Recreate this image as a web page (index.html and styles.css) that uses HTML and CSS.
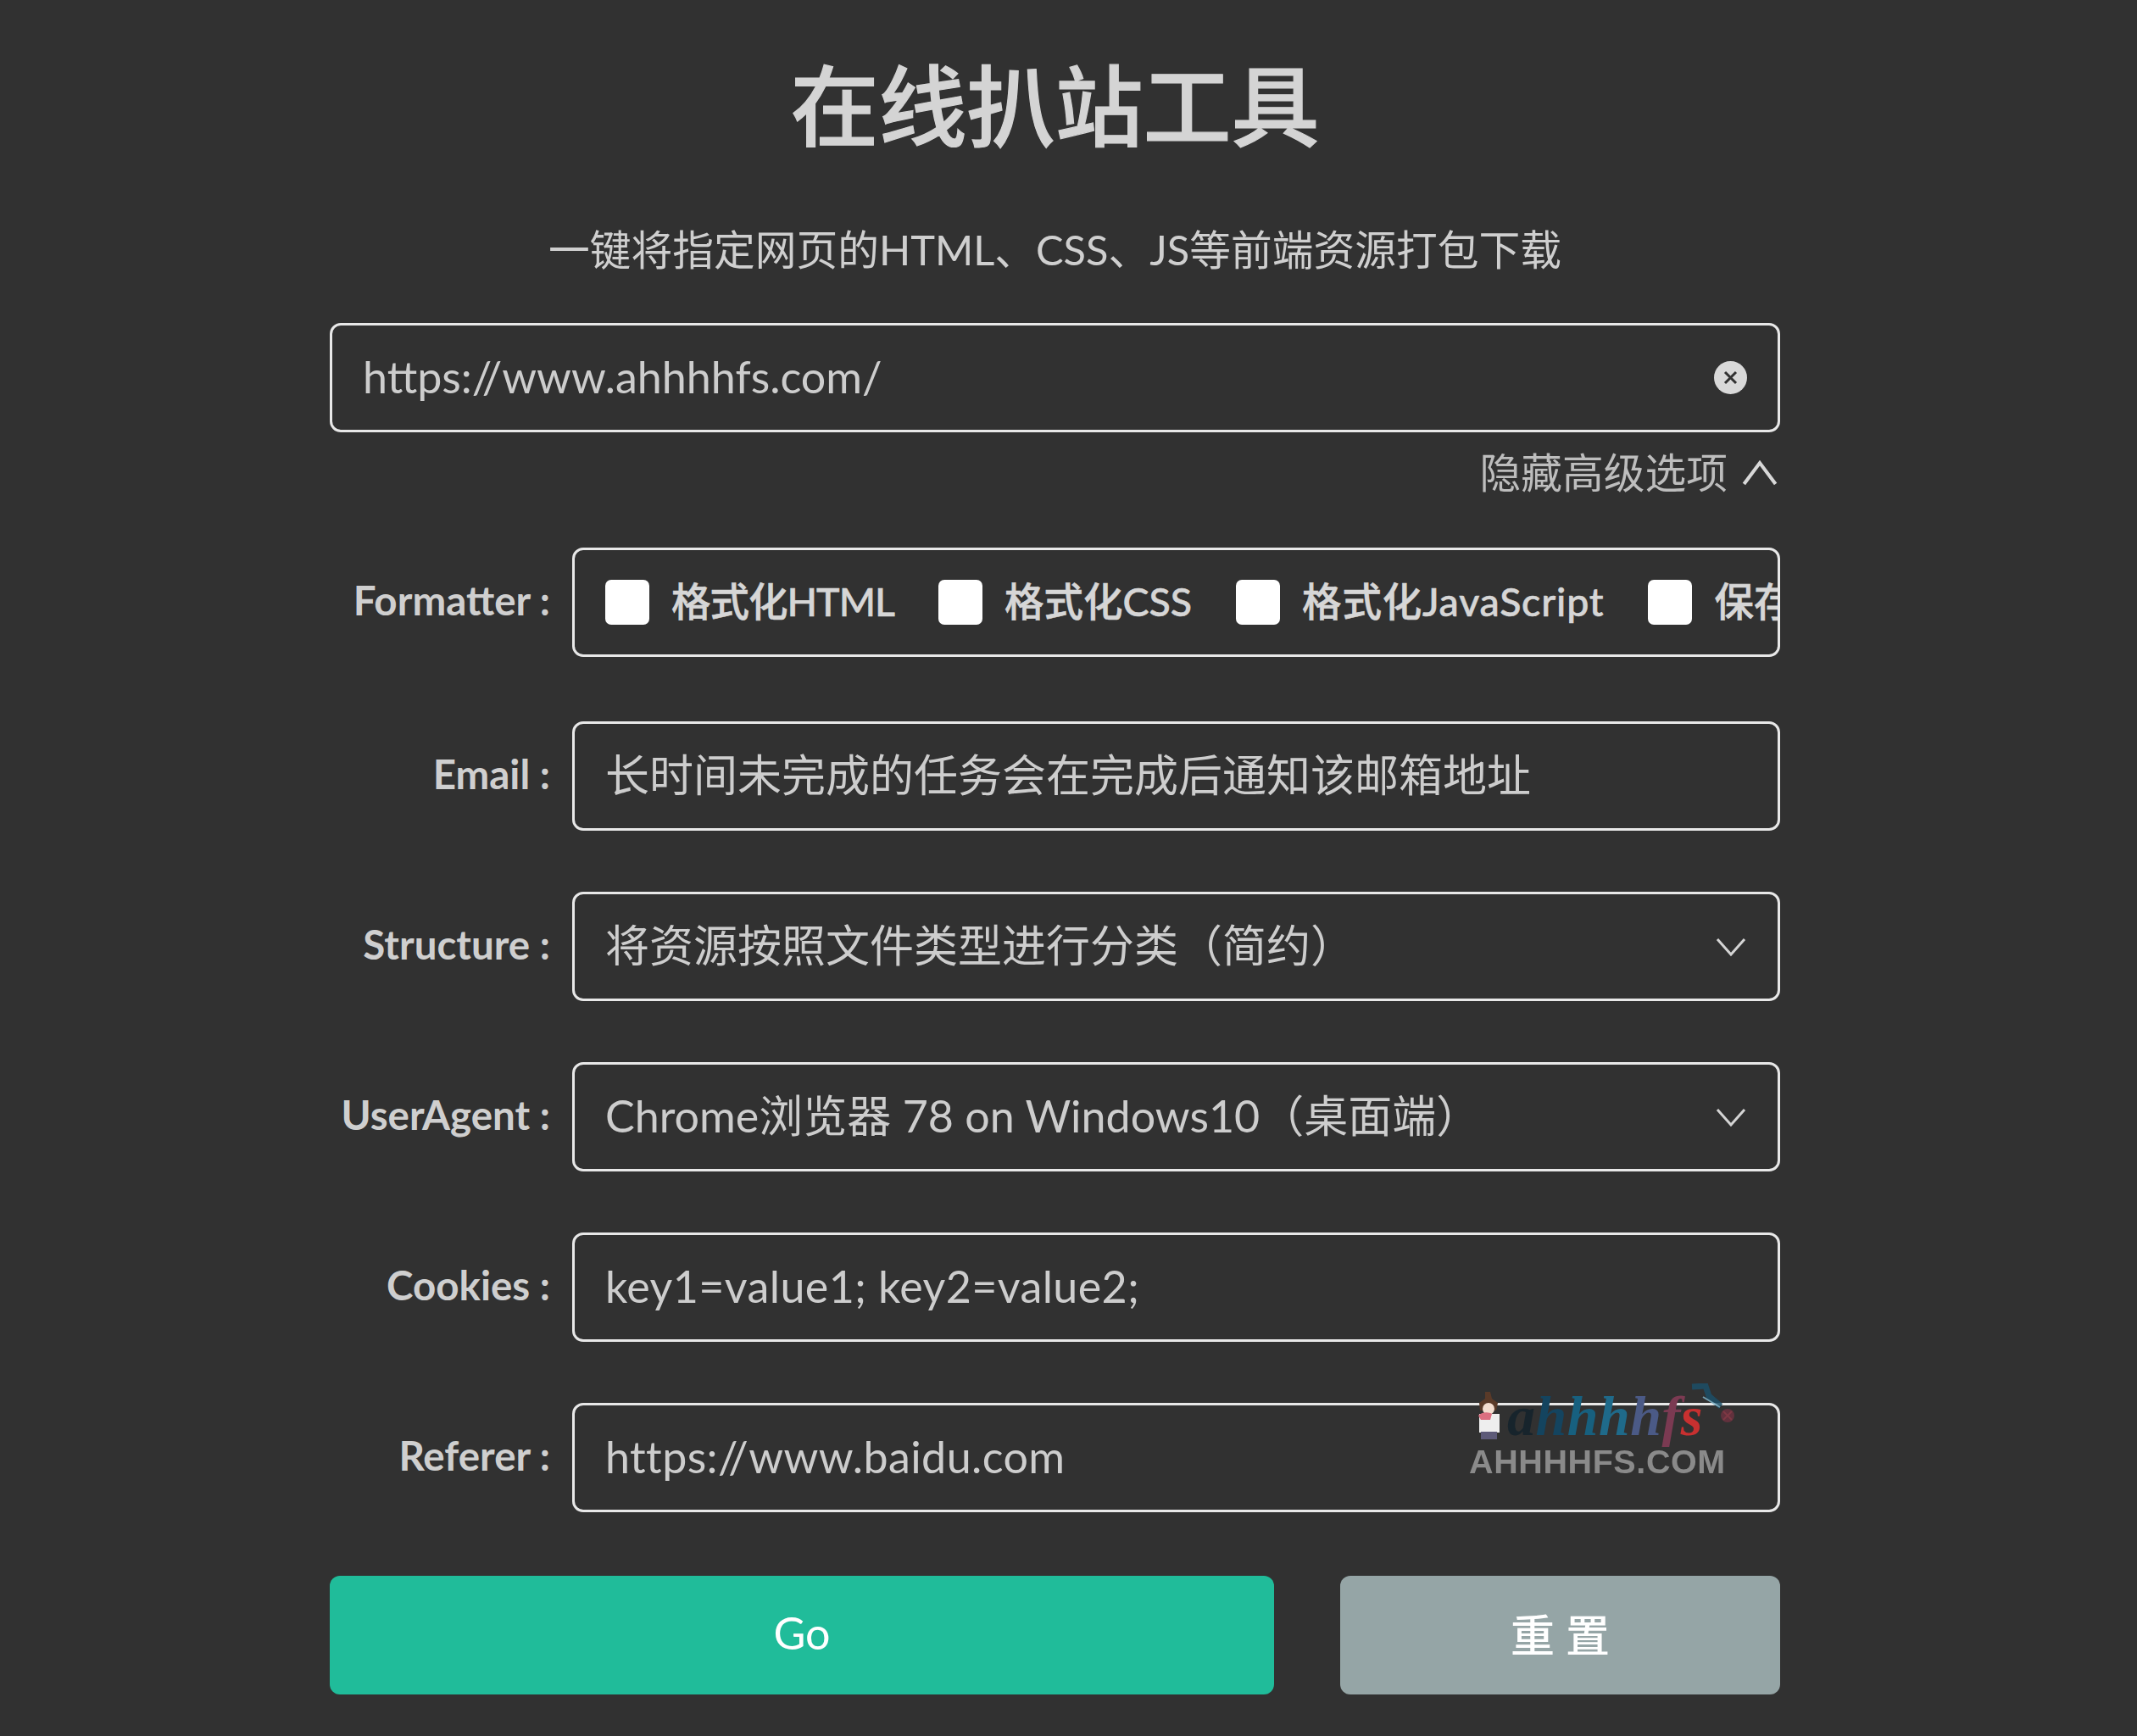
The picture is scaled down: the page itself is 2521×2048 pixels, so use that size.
FILE: index.html
```html
<!DOCTYPE html>
<html lang="zh-CN">
<head>
<meta charset="utf-8">
<title>在线扒站工具</title>
<link rel="stylesheet" href="styles.css">
</head>
<body>
<main class="page">
  <h1 class="title">在线扒站工具</h1>
  <p class="subtitle">一键将指定网页的HTML、CSS、JS等前端资源打包下载</p>

  <div class="box url-box">
    <span class="value latin">https://www.ahhhhfs.com/</span>
    <svg class="clear" viewBox="0 0 39 39" aria-hidden="true"><circle cx="19.5" cy="19.5" r="19.5" fill="#d9d9d9"/><path d="M13 13l13 13M26 13L13 26" stroke="#313131" stroke-width="3" fill="none"/></svg>
  </div>

  <div class="toggle">
    <span>隐藏高级选项</span>
    <svg class="chev-up" viewBox="0 0 40 30" aria-hidden="true"><path d="M2 28L20 4l18 24" stroke="#d8d8d8" stroke-width="4" fill="none"/></svg>
  </div>

  <form class="rows">
    <div class="row row-first">
      <label class="label">Formatter :</label>
      <div class="box checks">
        <span class="check"><i class="tick"></i><span class="check-text narrow">格式化HTML</span></span>
        <span class="check"><i class="tick"></i><span class="check-text">格式化CSS</span></span>
        <span class="check"><i class="tick"></i><span class="check-text wide">格式化JavaScript</span></span>
        <span class="check"><i class="tick"></i><span class="check-text">保存网页</span></span>
      </div>
    </div>
    <div class="row">
      <label class="label">Email :</label>
      <div class="box"><span class="value">长时间未完成的任务会在完成后通知该邮箱地址</span></div>
    </div>
    <div class="row">
      <label class="label">Structure :</label>
      <div class="box">
        <span class="value">将资源按照文件类型进行分类（简约）</span>
        <svg class="chev" viewBox="0 0 36 24" aria-hidden="true"><path d="M2 3l16 18L34 3" stroke="#d4d4d4" stroke-width="3" fill="none"/></svg>
      </div>
    </div>
    <div class="row">
      <label class="label">UserAgent :</label>
      <div class="box">
        <span class="value">Chrome浏览器 78 on Windows10（桌面端）</span>
        <svg class="chev" viewBox="0 0 36 24" aria-hidden="true"><path d="M2 3l16 18L34 3" stroke="#d4d4d4" stroke-width="3" fill="none"/></svg>
      </div>
    </div>
    <div class="row">
      <label class="label">Cookies :</label>
      <div class="box"><span class="value latin wide">key1=value1; key2=value2;</span></div>
    </div>
    <div class="row">
      <label class="label">Referer :</label>
      <div class="box"><span class="value latin wide">https://www.baidu.com</span></div>
      <div class="mark">
        <div class="mark-top">
          <svg class="mark-girl" viewBox="0 0 26 56" aria-hidden="true">
            <path d="M9 0h6l2 8 7 5-2 9H3L2 13l7-5z" fill="#5a3a28"/>
            <circle cx="13" cy="20" r="7" fill="#f3ddcf"/>
            <path d="M2 26h24v22H2z" fill="#eeeeee"/>
            <path d="M1 28c5-5 13-4 16-2l-2 7H4z" fill="#dc6f80"/>
            <path d="M4 47h19v9H4z" fill="#5d5a78"/>
          </svg>
          <span class="mark-word"><b class="c1">a</b><b class="c2">h</b><b class="c3">h</b><b class="c4">h</b><b class="c5">h</b><b class="c6">f</b><b class="c7">s</b></span>
          <svg class="mark-deco" viewBox="0 0 56 50" aria-hidden="true">
            <path d="M3 4l16-1 4 12 14 12" stroke="#1d4f68" stroke-width="7" fill="none"/>
            <path d="M16 16l20 12" stroke="#7fb3c8" stroke-width="2" fill="none"/>
            <circle cx="45" cy="38" r="8" fill="#6b3240"/>
            <path d="M40 33l10 10M50 33L40 43" stroke="#8c3a48" stroke-width="2" fill="none"/>
          </svg>
        </div>
        <div class="mark-site">AHHHHFS.COM</div>
      </div>
    </div>
    <div class="actions">
      <button class="btn go" type="button"><span class="btn-text">Go</span></button>
      <button class="btn reset" type="button"><span class="btn-text">重 置</span></button>
    </div>
  </form>
</main>
</body>
</html>
```
FILE: styles.css
```css
* { box-sizing: border-box; }
html, body { margin: 0; padding: 0; background: #313131; }
body { height: 2048px; overflow: hidden; font-family: Lato, "Noto Sans CJK SC", sans-serif; color: #cfcfcf; }
.page { width: 1711px; margin-left: 389px; }
.title { margin: 0; padding-top: 50px; height: 246px; font-size: 104px; line-height: 140px; text-align: center; color: #d4d4d4; font-family: "Noto Sans CJK SC", sans-serif; font-weight: 500; -webkit-text-stroke: 1.2px #d4d4d4; }
.subtitle { margin: 0; height: 135px; padding-top: 14px; font-size: 48.75px; line-height: 68px; text-align: center; color: #cfcfcf; }
.box { flex: 1; height: 129px; min-width: 0; display: flex; align-items: center; justify-content: space-between; padding: 0 36px; border: 3px solid #e8e8e8; border-radius: 13px; font-size: 52px; overflow: hidden; white-space: nowrap; }
.value { color: #cdcdcd; margin-bottom: 9px; }
.value.latin { margin-bottom: 4px; }
.wide { letter-spacing: 0.4px; }
.clear { width: 39px; height: 39px; flex: none; }
.toggle { height: 136px; padding-top: 18px; display: flex; justify-content: flex-end; align-items: flex-start; gap: 17px; font-size: 48.75px; line-height: 58px; color: #bdbdbd; }
.chev-up { width: 42px; height: 31px; margin-top: 14px; margin-right: 3px; }
.rows { display: flex; flex-direction: column; gap: 72px; }
.row { display: flex; align-items: center; gap: 26px; position: relative; }
.row-first { margin-bottom: 4px; }
.label { width: 260px; flex: none; text-align: right; font-size: 47.5px; font-weight: 700; color: #cfcfcf; white-space: nowrap; margin-bottom: 6px; }
.checks { justify-content: flex-start; gap: 52px; font-size: 46.5px; font-weight: 500; padding-right: 0; }
.check { display: flex; align-items: center; gap: 26px; flex: none; color: #d6d6d6; }
.check-text { margin-bottom: 9px; -webkit-text-stroke: 0.6px #d6d6d6; }
.check-text.wide { letter-spacing: 0.8px; }
.check-text.narrow { letter-spacing: -1px; }
.tick { width: 52px; height: 53px; border-radius: 7px; background: #fff; display: block; flex: none; }
.chev { width: 36px; height: 24px; flex: none; margin-right: 1px; }
.mark { position: absolute; left: 1344px; top: -19px; width: 330px; pointer-events: none; filter: blur(0.6px); }
.mark-top { position: relative; height: 65px; }
.mark-girl { position: absolute; left: 10px; top: 6px; width: 26px; height: 56px; }
.mark-word { position: absolute; left: 45px; top: -3px; font-family: "Liberation Serif", serif; font-style: italic; font-size: 66px; line-height: 76px; letter-spacing: 0.5px; }
.mark-word b { font-weight: 700; }
.c1 { color: #17242c; }
.c2 { color: #14445f; }
.c3 { color: #17607f; }
.c4 { color: #1f6a8a; }
.c5 { color: #4b5a86; }
.c6 { color: #7b3a52; }
.c7 { color: #c83030; }
.mark-deco { position: absolute; left: 260px; top: -4px; width: 56px; height: 50px; opacity: 0.85; }
.mark-site { font-family: "Liberation Sans", sans-serif; font-weight: 700; font-size: 39.5px; line-height: 46px; letter-spacing: 0.6px; color: #8a8a8a; }
.actions { display: flex; justify-content: space-between; margin-top: 3px; }
.btn { height: 140px; border: 0; border-radius: 12px; color: #fff; font-family: Lato, "Noto Sans CJK SC", sans-serif; font-size: 52px; }
.btn-text { display: block; margin-bottom: 6px; }
.go { width: 1114px; background: #20bc9a; }
.reset { width: 519px; background: #95a5a6; font-weight: 500; }
```
